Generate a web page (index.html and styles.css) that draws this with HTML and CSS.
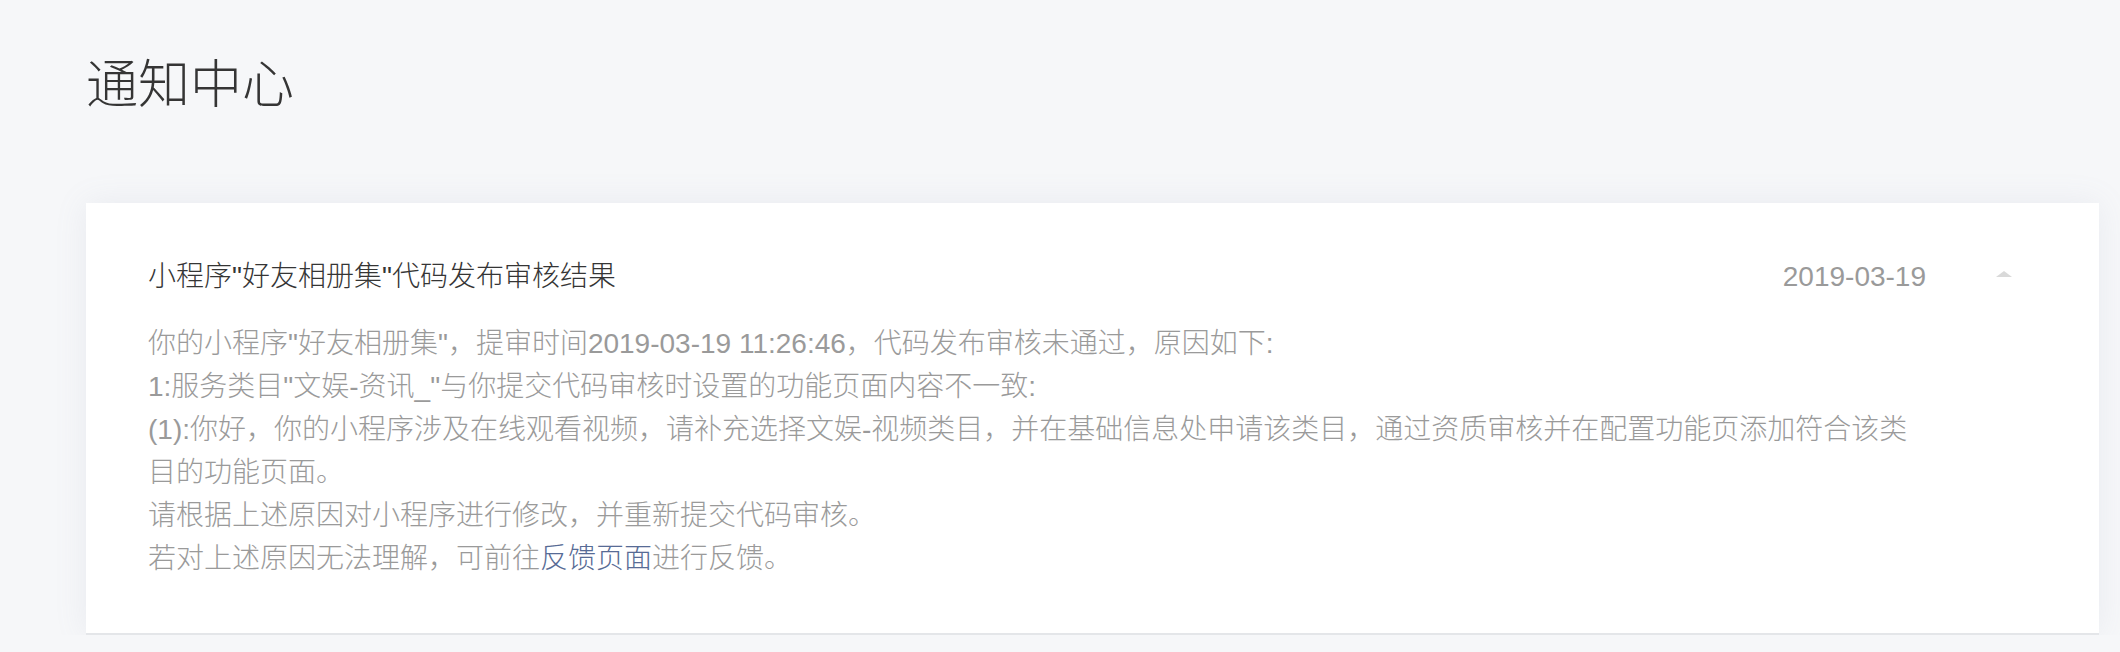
FILE: index.html
```html
<!DOCTYPE html>
<html lang="zh-CN">
<head>
    <meta charset="UTF-8">
    <title>通知中心</title>
    <link rel="stylesheet" href="styles.css">
</head>
<body>
	<div class="page">
		<h1 class="page-title">通知中心</h1>
		<ul class="notice-list">
			<li class="notice">
				<div class="notice-hd">
					<h3 class="notice-title">小程序"好友相册集"代码发布审核结果</h3>
					<span class="notice-date">2019-03-19</span>
					<a class="notice-toggle" href="javascript:;"></a>
				</div>
				<div class="notice-bd">
					<p>你的小程序"好友相册集"，提审时间2019-03-19 11:26:46，代码发布审核未通过，原因如下:</p>
					<p>1:服务类目"文娱-资讯_"与你提交代码审核时设置的功能页面内容不一致:</p>
					<p>(1):你好，你的小程序涉及在线观看视频，请补充选择文娱-视频类目，并在基础信息处申请该类目，通过资质审核并在配置功能页添加符合该类目的功能页面。</p>
					<p>请根据上述原因对小程序进行修改，并重新提交代码审核。</p>
					<p>若对上述原因无法理解，可前往<a href="javascript:;">反馈页面</a>进行反馈。</p>
				</div>
			</li>
		</ul>
	</div>
</body>
</html>
```

FILE: styles.css
```css
	body {
		margin: 0;
		background: #f6f7f9;
		font-family: "Liberation Sans", "Noto Sans CJK SC", sans-serif;
		font-weight: 300;
	}
	.page {
		padding: 55px 21px 0 86px;
	}
	.page-title {
		margin: 0;
		font-size: 52px;
		font-weight: 300;
		line-height: 60px;
		color: #353535;
	}
	.notice-list {
		margin: 88px 0 0;
		padding: 0;
		list-style: none;
	}
	.notice {
		background: #fff;
		border-bottom: 2px solid #e4e6e9;
		box-shadow: 0 0 30px rgba(140, 150, 175, 0.12);
		padding: 52px 87px 53px 62px;
	}
	.notice-hd {
		display: flex;
		align-items: center;
		line-height: 44px;
	}
	.notice-title {
		flex: 1;
		margin: 0;
		font-size: 28px;
		font-weight: 300;
		color: #353535;
	}
	.notice-date {
		font-size: 28px;
		color: #9a9a9a;
	}
	.notice-toggle {
		width: 0;
		height: 0;
		margin: -6px 0 0 70px;
		border-left: 8px solid transparent;
		border-right: 8px solid transparent;
		border-bottom: 6px solid #d9d9d9;
	}
	.notice-bd {
		margin: 23px 90px 0 0;
		font-size: 28px;
		line-height: 43px;
		color: #9a9a9a;
	}
	.notice-bd p {
		margin: 0;
	}
	.notice-bd a {
		color: #576b95;
		text-decoration: none;
	}
```
